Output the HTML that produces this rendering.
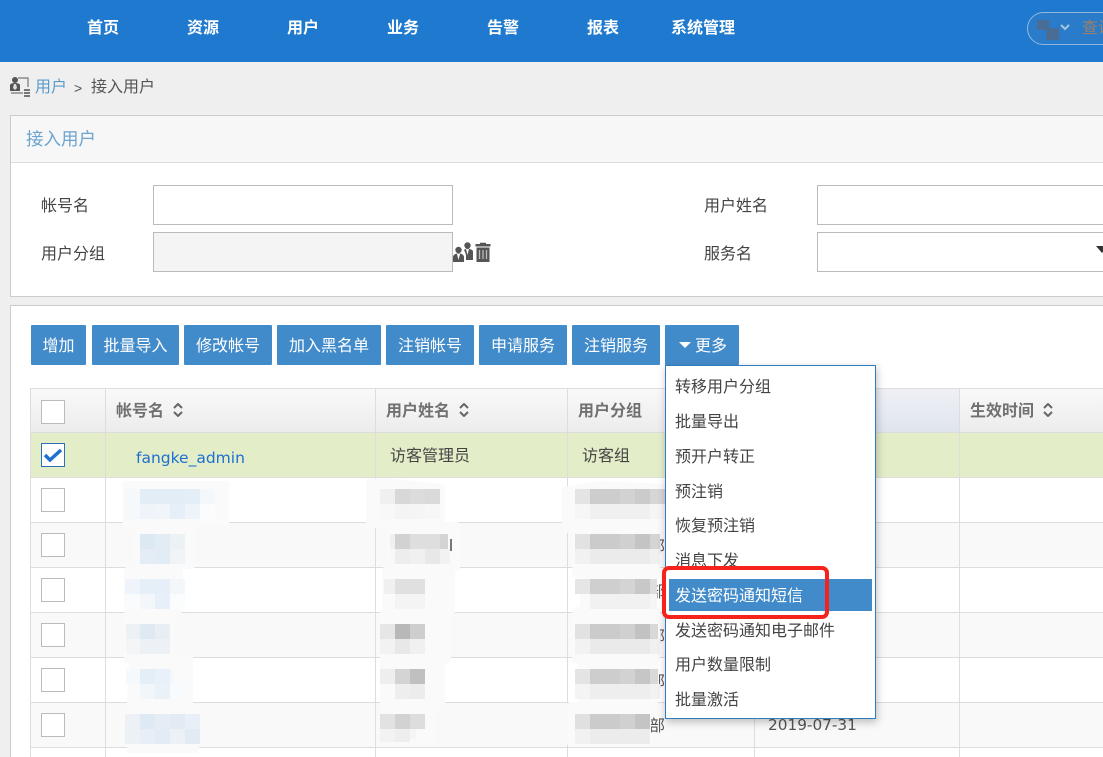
<!DOCTYPE html>
<html lang="zh-CN"><head><meta charset="utf-8"><title>接入用户</title>
<style>
html,body{margin:0;padding:0;width:1103px;height:757px;overflow:hidden;background:#efefef}
body{position:relative;font:16px/20px "Liberation Sans","Noto Sans CJK SC",sans-serif;color:#444}
.a,.n,.l,.b,.h,.m,.c,.i{position:absolute;white-space:nowrap;box-sizing:border-box}
.n{top:19px;width:100px;text-align:center;color:#fff;font-weight:700;line-height:20px}
.l{left:41px}
.i{width:300px;height:40px;border:1px solid #bbb;background:#fff}
.b{top:325px;height:40px;line-height:44px;background:#428bca;color:#fff;text-align:center;border-radius:1px}
.s{display:inline-block;vertical-align:-1px;margin-left:9px}
.c{left:41px;width:24px;height:24px;border:1px solid #bbb;background:#fff}
.hl{left:30px;width:1073px;height:1px;background:#ddd}
.m{left:675px;line-height:20px;color:#444}
.th{color:#707070;font-weight:700}
</style></head><body>
<div class="a" style="left:0;top:0;width:1103px;height:62px;background:#1f7acf"></div>
<div class="n" style="left:53px">首页</div><div class="n" style="left:153px">资源</div><div class="n" style="left:253px">用户</div><div class="n" style="left:353px">业务</div><div class="n" style="left:453px">告警</div><div class="n" style="left:553px">报表</div><div class="n" style="left:653px">系统管理</div>
<div class="a" style="left:1027px;top:12px;width:100px;height:33px;border:1px solid #8fb8e0;border-radius:17px;background:#2a7cca"></div>
<svg class="a" style="left:1035px;top:18px" width="40" height="24"><path d="M2 2h12v10l-3 1v-1H2z" fill="#4a6d96"/><path d="M11 10h13v12H11z" fill="#4a6d96"/><path d="M26 7l4 4 4-4" fill="none" stroke="#a9c4df" stroke-width="2"/></svg>
<div class="a" style="left:1082px;top:19px;color:#9a8068;font-size:16px">查询</div>

<svg class="a" style="left:10px;top:76px" width="21" height="22" viewBox="0 0 21 22"><circle cx="5" cy="4" r="3" fill="#555"/><path d="M0 9c0-1 2-2 5-2s5 1 5 2v6H0z" fill="#555"/><path d="M4 8h2l1 4-2 2-2-2z" fill="#ddd"/><path d="M8 2h10v9M1 17h12" fill="none" stroke="#777" stroke-width="1.2"/><path d="M14 13h6v2h-6zM14 16h6v2h-6zM14 19h6v2h-6z" fill="#777"/></svg>
<div class="a" style="left:35px;top:78px;color:#5b9bc8">用户</div>
<div class="a" style="left:74px;top:78px;color:#555;font-size:14px">&gt;</div>
<div class="a" style="left:91px;top:78px;color:#555">接入用户</div>

<div class="a" style="left:10px;top:115px;width:1103px;height:182px;background:#fff;border:1px solid #ccc"></div>
<div class="a" style="left:11px;top:116px;width:1092px;height:47px;background:#f7f7f7;border-bottom:1px solid #ddd"></div>
<div class="a" style="left:26px;top:129px;color:#6ba5cf;font-size:17.5px">接入用户</div>
<div class="l" style="top:197px">帐号名</div><div class="l" style="top:245px">用户分组</div>
<div class="l" style="left:704px;top:197px">用户姓名</div><div class="l" style="left:704px;top:245px">服务名</div>
<div class="i" style="left:153px;top:185px"></div>
<div class="i" style="left:153px;top:232px;background:#f4f4f4"></div>
<div class="i" style="left:817px;top:185px;width:300px"></div>
<div class="i" style="left:817px;top:232px;width:300px"></div>
<svg class="a" style="left:1096px;top:246px" width="7" height="8"><path d="M0 0h12L6 7z" fill="#333"/></svg>
<svg class="a" style="left:453px;top:242px" width="20" height="21" viewBox="0 0 20 21"><circle cx="5.5" cy="8" r="3.2" fill="#555"/><path d="M0 20v-5c0-2 2-3.500 5.500-3.500S11 13 11 15v5z" fill="#555"/><path d="M4 12h3l-1.500 6z" fill="#fff"/><circle cx="14.500" cy="3.500" r="3.200" fill="#555"/><path d="M11 8c1-1 2-1.500 3.500-1.500S19 7.500 20 9v9h-7v-4c0-2-1-4-2-6z" fill="#555"/><path d="M13 7h3l-1.500 6z" fill="#fff"/></svg>
<svg class="a" style="left:475px;top:242px" width="16" height="20" viewBox="0 0 16 20"><path d="M5 2V.800h6V2h4.500v2.500H.500V2z" fill="#555"/><path d="M1.500 5.500h13V20h-13z" fill="#555"/><path d="M4.500 8v9M8 8v9M11.500 8v9" stroke="#bbb" stroke-width="1.300"/></svg>

<div class="a" style="left:10px;top:305px;width:1103px;height:470px;background:#fff;border:1px solid #ccc"></div>
<div class="b" style="left:31px;width:55px">增加</div>
<div class="b" style="left:92px;width:87px">批量导入</div>
<div class="b" style="left:184px;width:88px">修改帐号</div>
<div class="b" style="left:277px;width:104px">加入黑名单</div>
<div class="b" style="left:386px;width:88px">注销帐号</div>
<div class="b" style="left:479px;width:88px">申请服务</div>
<div class="b" style="left:572px;width:88px">注销服务</div>
<div class="b" style="left:665px;width:74px;padding-left:30px;text-align:left"><span style="position:absolute;left:14px;top:17px;border:6px solid transparent;border-top:6px solid #fff;border-bottom:0"></span>更多</div>

<div class="a" style="left:30px;top:388px;width:1073px;height:44px;background:linear-gradient(#f9f9f9,#ececec);border-top:1px solid #ddd"></div>
<div class="a" style="left:30px;top:432px;width:1073px;height:1px;background:#dcdcdc"></div>
<div class="a" style="left:30px;top:433px;width:1073px;height:44px;background:#e3edc8"></div>
<div class="a" style="left:30px;top:523px;width:1073px;height:44px;background:#f9f9f9"></div>
<div class="a" style="left:30px;top:613px;width:1073px;height:44px;background:#f9f9f9"></div>
<div class="a" style="left:30px;top:703px;width:1073px;height:44px;background:#f9f9f9"></div>
<div class="a hl" style="top:477px"></div><div class="a hl" style="top:522px"></div><div class="a hl" style="top:567px"></div><div class="a hl" style="top:612px"></div><div class="a hl" style="top:657px"></div><div class="a hl" style="top:702px"></div><div class="a hl" style="top:747px"></div>
<div class="a" style="left:30px;top:388px;width:1px;height:369px;background:#ddd"></div>
<div class="a" style="left:105px;top:388px;width:1px;height:369px;background:#ddd"></div>
<div class="a" style="left:375px;top:388px;width:1px;height:369px;background:#ddd"></div>
<div class="a" style="left:567px;top:388px;width:1px;height:369px;background:#ddd"></div>
<div class="a" style="left:754px;top:388px;width:1px;height:369px;background:#ddd"></div>
<div class="a" style="left:959px;top:388px;width:1px;height:369px;background:#ddd"></div>
<div class="a" style="left:876px;top:389px;width:83px;height:43px;background:linear-gradient(#eef0f5,#e0e5ee)"></div>

<div class="a th" style="left:116px;top:402px">帐号名<svg class="s" width="10" height="14" viewBox="0 0 10 14"><path d="M1 5l4-4 4 4M1 9l4 4 4-4" fill="none" stroke="#666" stroke-width="2"/></svg></div>
<div class="a th" style="left:386px;top:402px">用户姓名<svg class="s" width="10" height="14" viewBox="0 0 10 14"><path d="M1 5l4-4 4 4M1 9l4 4 4-4" fill="none" stroke="#666" stroke-width="2"/></svg></div>
<div class="a th" style="left:578px;top:402px">用户分组</div>
<div class="a th" style="left:970px;top:402px">生效时间<svg class="s" width="10" height="14" viewBox="0 0 10 14"><path d="M1 5l4-4 4 4M1 9l4 4 4-4" fill="none" stroke="#666" stroke-width="2"/></svg></div>

<div class="c" style="top:400px"></div>
<div class="c" style="top:443px;border-color:#2a70b8"><svg width="22" height="22" style="display:block"><path d="M3 11l5 5L19 6" fill="none" stroke="#1f6fd0" stroke-width="3.500"/></svg></div>
<div class="c" style="top:488px"></div><div class="c" style="top:533px"></div><div class="c" style="top:578px"></div><div class="c" style="top:623px"></div><div class="c" style="top:668px"></div><div class="c" style="top:713px"></div>

<div class="a" style="left:136px;top:448px;color:#1e6fd0;font-family:'DejaVu Sans',sans-serif;font-size:15.500px">fangke_admin</div>
<div class="a" style="left:390px;top:447px;color:#444">访客管理员</div>
<div class="a" style="left:582px;top:447px;color:#444">访客组</div>
<div class="a" style="left:649px;top:538px;color:#555">部</div>
<div class="a" style="left:649px;top:583px;color:#555">部</div>
<div class="a" style="left:649px;top:628px;color:#555">部</div>
<div class="a" style="left:649px;top:673px;color:#555">部</div>
<div class="a" style="left:649px;top:717px;color:#555">部</div>
<div class="a" style="left:768px;top:715px;color:#555;font-family:'DejaVu Sans',sans-serif;font-size:15.300px">2019-07-31</div>

<svg class="a" style="left:0;top:0" width="1103" height="757">
<g fill="#fafafa" stroke="#fafafa" stroke-width="6" stroke-linejoin="round">
<path d="M126 484H226V522H192V566H180V610H172V658H190V708H196V750H130V705L132 660H127V612L127 570H136V526H126Z"/>
<path d="M369 482L385 481L442 487V525H457V568H452V612H448V660H442V705H432V742H385V705H383V660H383V612H385V570H391V525H369Z"/>
<path d="M565 490L600 484L665 487V528H657V575H654V610H657V660H655V705H648V743H570V705H581V660H575V610H583V575H575V530H565Z"/>
</g>
<g id="left">
<rect x="125" y="489" width="15" height="30" fill="#f6f9fc"/><rect x="140" y="489" width="15" height="15" fill="#e3edf6"/><rect x="155" y="489" width="15" height="15" fill="#e3edf6"/><rect x="170" y="489" width="15" height="15" fill="#e3edf6"/><rect x="185" y="489" width="15" height="15" fill="#e4eef7"/><rect x="200" y="489" width="15" height="15" fill="#f4f8fb"/>
<rect x="140" y="504" width="15" height="15" fill="#eef4f9"/><rect x="155" y="504" width="15" height="15" fill="#f0f5fa"/><rect x="170" y="504" width="15" height="15" fill="#e6eff7"/><rect x="185" y="504" width="15" height="15" fill="#eef4fa"/><rect x="200" y="504" width="15" height="15" fill="#fafcfe"/>
<rect x="140" y="534" width="15" height="15" fill="#dce8f2"/><rect x="155" y="534" width="15" height="15" fill="#e2ecf5"/><rect x="170" y="534" width="15" height="15" fill="#ecf1f5"/>
<rect x="140" y="549" width="15" height="15" fill="#e4edf5"/><rect x="155" y="549" width="15" height="15" fill="#e2ecf5"/><rect x="170" y="549" width="15" height="15" fill="#f0f4f7"/>
<rect x="125" y="579" width="15" height="15" fill="#eef4f9"/><rect x="140" y="579" width="15" height="15" fill="#e4eff7"/><rect x="155" y="579" width="15" height="15" fill="#e6eff7"/><rect x="170" y="579" width="15" height="15" fill="#f3f7fa"/>
<rect x="125" y="594" width="15" height="15" fill="#f9fbfd"/><rect x="140" y="594" width="15" height="15" fill="#f3f7fa"/><rect x="155" y="594" width="15" height="15" fill="#e7f0f8"/><rect x="170" y="594" width="15" height="15" fill="#fbfcfe"/>
<rect x="126" y="624" width="14" height="15" fill="#edf1f5"/><rect x="140" y="624" width="15" height="15" fill="#dfe9f2"/><rect x="155" y="624" width="15" height="15" fill="#e8eef4"/>
<rect x="126" y="639" width="14" height="15" fill="#f3f5f7"/><rect x="140" y="639" width="15" height="15" fill="#ecf1f5"/><rect x="155" y="639" width="15" height="15" fill="#edf1f5"/>
<rect x="126" y="669" width="14" height="15" fill="#f5f9fc"/><rect x="140" y="669" width="15" height="15" fill="#e3eef7"/><rect x="155" y="669" width="15" height="15" fill="#e8f1f9"/><rect x="170" y="669" width="4" height="15" fill="#f5f8fb"/>
<rect x="140" y="684" width="15" height="15" fill="#f1f6fa"/><rect x="155" y="684" width="15" height="15" fill="#e9f2f9"/><rect x="170" y="684" width="15" height="15" fill="#f8fbfd"/>
<rect x="125" y="714" width="15" height="15" fill="#edf1f6"/><rect x="140" y="714" width="15" height="15" fill="#dfe9f3"/><rect x="155" y="714" width="15" height="15" fill="#e5ecf4"/><rect x="170" y="714" width="15" height="15" fill="#e2ebf4"/><rect x="185" y="714" width="15" height="15" fill="#e9eff7"/>
<rect x="125" y="729" width="15" height="15" fill="#ecf1f6"/><rect x="140" y="729" width="15" height="15" fill="#e7eef6"/><rect x="155" y="729" width="15" height="15" fill="#e3ebf4"/><rect x="170" y="729" width="15" height="15" fill="#ebf1f6"/><rect x="185" y="729" width="15" height="15" fill="#e2eaf4"/>
</g>
<g id="mid">
<rect x="380" y="489" width="15" height="15" fill="#f0f0f0"/><rect x="395" y="489" width="15" height="15" fill="#d8d8d8"/><rect x="410" y="489" width="15" height="15" fill="#dcdcdc"/><rect x="425" y="489" width="15" height="15" fill="#dadada"/>
<rect x="380" y="504" width="15" height="15" fill="#f8f8f8"/><rect x="395" y="504" width="15" height="15" fill="#f4f4f4"/><rect x="410" y="504" width="15" height="15" fill="#f5f5f5"/><rect x="425" y="504" width="15" height="15" fill="#f7f7f7"/>
<rect x="390" y="534" width="5" height="15" fill="#f0f0f0"/><rect x="395" y="534" width="15" height="15" fill="#d2d2d2"/><rect x="410" y="534" width="15" height="15" fill="#dedede"/><rect x="425" y="534" width="15" height="15" fill="#dedede"/><rect x="440" y="534" width="8" height="15" fill="#d4d4d4"/>
<rect x="390" y="549" width="5" height="15" fill="#f8f8f8"/><rect x="395" y="549" width="15" height="15" fill="#ededed"/><rect x="410" y="549" width="15" height="15" fill="#f0f0f0"/><rect x="425" y="549" width="15" height="15" fill="#e8e8e8"/><rect x="440" y="549" width="10" height="15" fill="#f2f2f2"/>
<rect x="384" y="579" width="11" height="15" fill="#f0f0f0"/><rect x="395" y="579" width="15" height="15" fill="#e0e0e0"/><rect x="410" y="579" width="15" height="15" fill="#e0e0e0"/><rect x="425" y="579" width="15" height="15" fill="#fafafa"/>
<rect x="384" y="594" width="11" height="15" fill="#fafafa"/><rect x="395" y="594" width="15" height="15" fill="#f4f4f4"/><rect x="410" y="594" width="15" height="15" fill="#f4f4f4"/>
<rect x="380" y="624" width="15" height="15" fill="#e6e6e6"/><rect x="395" y="624" width="15" height="15" fill="#b8b8b8"/><rect x="410" y="624" width="15" height="15" fill="#cecece"/>
<rect x="380" y="639" width="15" height="15" fill="#f2f2f2"/><rect x="395" y="639" width="15" height="15" fill="#e8e8e8"/><rect x="410" y="639" width="15" height="15" fill="#f0f0f0"/>
<rect x="380" y="669" width="15" height="15" fill="#eee"/><rect x="395" y="669" width="15" height="15" fill="#d4d4d4"/><rect x="410" y="669" width="15" height="15" fill="#c0c0c0"/>
<rect x="380" y="684" width="15" height="15" fill="#fafafa"/><rect x="395" y="684" width="15" height="15" fill="#eee"/><rect x="410" y="684" width="15" height="15" fill="#ececec"/>
<rect x="380" y="714" width="15" height="15" fill="#e2e2e2"/><rect x="395" y="714" width="15" height="15" fill="#d2d2d2"/><rect x="410" y="714" width="15" height="15" fill="#ddd"/>
<rect x="380" y="729" width="15" height="13" fill="#f2f2f2"/><rect x="395" y="729" width="15" height="13" fill="#eee"/><rect x="410" y="729" width="6" height="10" fill="#f5f5f5"/>
<rect x="450" y="539" width="2" height="12" fill="#777"/>
</g>
<g id="right">
<rect x="575" y="489" width="15" height="15" fill="#e4e4e4"/><rect x="590" y="489" width="30" height="15" fill="#cdcdcd"/><rect x="620" y="489" width="15" height="15" fill="#d2d2d2"/><rect x="635" y="489" width="15" height="15" fill="#cbcbcb"/><rect x="650" y="489" width="15" height="15" fill="#d6d6d6"/><rect x="575" y="504" width="15" height="15" fill="#f6f6f6"/><rect x="590" y="504" width="60" height="15" fill="#f0f0f0"/><rect x="650" y="504" width="15" height="15" fill="#f5f5f5"/>
<rect x="575" y="534" width="15" height="15" fill="#e2e2e2"/><rect x="590" y="534" width="30" height="15" fill="#cbcbcb"/><rect x="620" y="534" width="15" height="15" fill="#d0d0d0"/><rect x="635" y="534" width="15" height="15" fill="#c4c4c4"/><rect x="650" y="534" width="10" height="15" fill="#d4d4d4"/><rect x="575" y="549" width="15" height="15" fill="#f1f1f1"/><rect x="590" y="549" width="60" height="15" fill="#ebebeb"/><rect x="650" y="549" width="10" height="15" fill="#f0f0f0"/>
<rect x="575" y="579" width="15" height="15" fill="#e6e6e6"/><rect x="590" y="579" width="30" height="15" fill="#cfcfcf"/><rect x="620" y="579" width="15" height="15" fill="#d4d4d4"/><rect x="635" y="579" width="15" height="15" fill="#c8c8c8"/><rect x="650" y="579" width="7" height="15" fill="#ddd"/><rect x="590" y="594" width="60" height="15" fill="#f1f1f1"/><rect x="650" y="594" width="7" height="15" fill="#f5f5f5"/>
<rect x="575" y="624" width="15" height="15" fill="#e2e2e2"/><rect x="590" y="624" width="30" height="15" fill="#cbcbcb"/><rect x="620" y="624" width="15" height="15" fill="#d0d0d0"/><rect x="635" y="624" width="15" height="15" fill="#c2c2c2"/><rect x="650" y="624" width="8" height="15" fill="#d8d8d8"/><rect x="575" y="639" width="15" height="15" fill="#f2f2f2"/><rect x="590" y="639" width="60" height="15" fill="#eaeaea"/><rect x="650" y="639" width="10" height="15" fill="#f0f0f0"/>
<rect x="575" y="669" width="15" height="15" fill="#e4e4e4"/><rect x="590" y="669" width="30" height="15" fill="#cdcdcd"/><rect x="620" y="669" width="15" height="15" fill="#d2d2d2"/><rect x="635" y="669" width="15" height="15" fill="#c6c6c6"/><rect x="650" y="669" width="8" height="15" fill="#d8d8d8"/><rect x="575" y="684" width="15" height="15" fill="#f4f4f4"/><rect x="590" y="684" width="60" height="15" fill="#eeeeee"/><rect x="650" y="684" width="10" height="15" fill="#f2f2f2"/>
<rect x="575" y="714" width="15" height="15" fill="#e0e0e0"/><rect x="590" y="714" width="30" height="15" fill="#cbcbcb"/><rect x="620" y="714" width="15" height="15" fill="#d0d0d0"/><rect x="635" y="714" width="15" height="15" fill="#c4c4c4"/><rect x="575" y="729" width="15" height="15" fill="#f1f1f1"/><rect x="590" y="729" width="60" height="15" fill="#ececec"/>
</g>
</svg>

<div class="a" style="left:665px;top:365px;width:211px;height:354px;background:#fff;border:1px solid #2f7cc0;box-shadow:1px 3px 8px rgba(0,0,0,.25)"></div>
<div class="a" style="left:669px;top:579px;width:203px;height:32px;background:#428bca"></div>
<div class="m" style="top:378px">转移用户分组</div>
<div class="m" style="top:413px">批量导出</div>
<div class="m" style="top:448px">预开户转正</div>
<div class="m" style="top:483px">预注销</div>
<div class="m" style="top:517px">恢复预注销</div>
<div class="m" style="top:552px">消息下发</div>
<div class="m" style="top:587px;color:#fff">发送密码通知短信</div>
<div class="m" style="top:622px">发送密码通知电子邮件</div>
<div class="m" style="top:656px">用户数量限制</div>
<div class="m" style="top:691px">批量激活</div>
<div class="a" style="left:662px;top:566px;width:167px;height:53px;border:4px solid #f5231b;border-radius:7px"></div>
</body></html>
